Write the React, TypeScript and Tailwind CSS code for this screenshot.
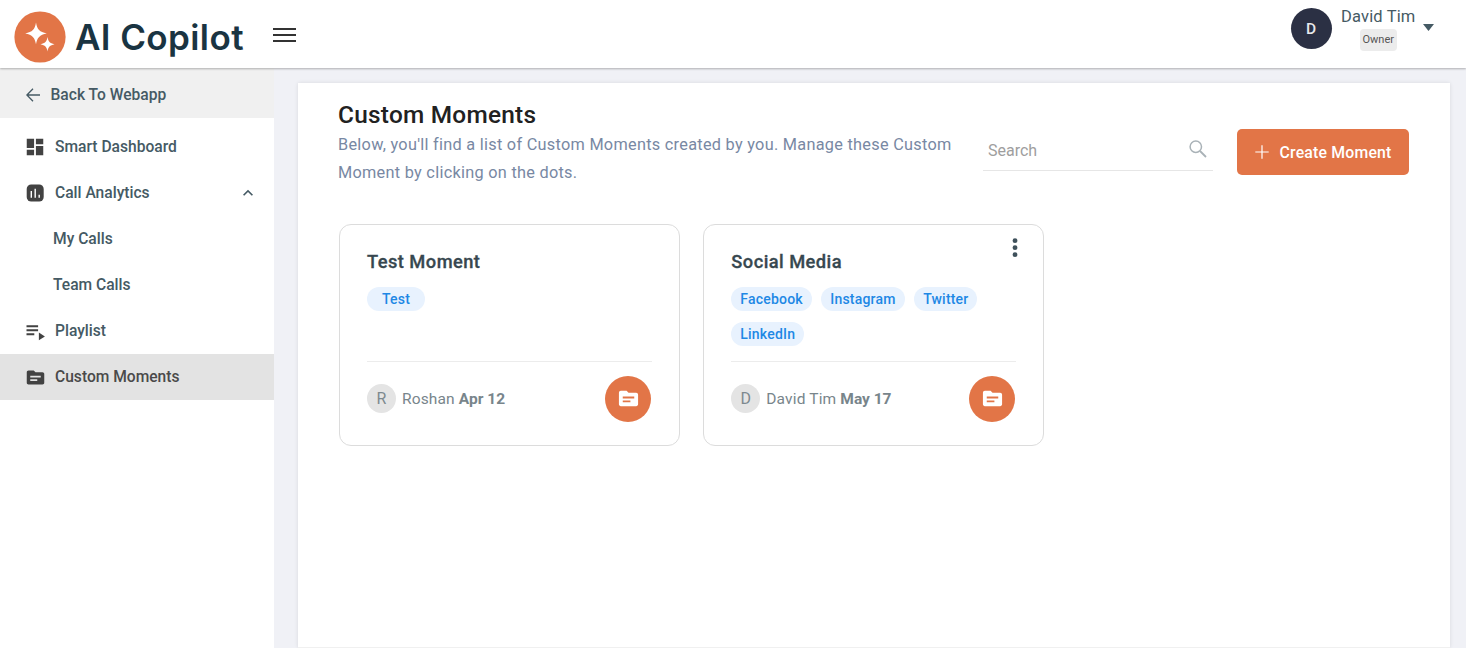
import { clsx } from "clsx";
import { MdDashboard, MdKeyboardArrowUp, MdSource } from "react-icons/md";

const AnalyticsIcon = () => (
  <svg width="18" height="18" viewBox="0 0 18 18">
    <rect x="0.7" y="0.5" width="17" height="17" rx="4.5" fill="#424242" />
    <path d="M5.3 7v6.8M9.2 4.8v9M13.2 10.8v3" stroke="#fff" strokeWidth="1.4" />
  </svg>
);

const PlaylistIcon = () => (
  <svg width="19" height="16" viewBox="0 0 19 16" fill="#424242" className="mt-[3px]">
    <path d="M0.5 0.3h11.6v1.9H0.5zM0.5 4.3h11.6v1.9H0.5zM0.5 8.3h7.8v1.9H0.5z" />
    <path d="M12.9 7.6v7.6l6-3.8z" />
  </svg>
);

const SparkleLogo = () => (
  <svg width="52" height="52" viewBox="0 0 52 52" className="shrink-0">
    <circle cx="26" cy="26" r="25.6" fill="#e27547" />
    <path
      fill="#fff"
      d="M22 11.5C23.2 18.5 25.5 20.9 32.8 22.4 25.5 23.9 23.2 26.3 22 33.3 20.8 26.3 18.5 23.9 11.2 22.4 18.5 20.9 20.8 18.5 22 11.5z"
    />
    <path
      fill="#fff"
      d="M33.5 26C34.3 30.6 35.8 32.2 40.5 33.2 35.8 34.2 34.3 35.8 33.5 40.4 32.7 35.8 31.2 34.2 26.5 33.2 31.2 32.2 32.7 30.6 33.5 26z"
    />
  </svg>
);

interface NavItemProps {
  label: string;
  icon?: React.ReactNode;
  active?: boolean;
  open?: boolean;
}

const NavItem = ({ label, icon, active, open }: NavItemProps) => {
  return (
    <li
      className={clsx(
        "flex items-center h-[46px] text-[15.6px] font-medium",
        icon ? "pl-[26px]" : "pl-[53px]",
        active ? "bg-[#e3e3e3] text-[#4a4a4a]" : "text-[#455a64]"
      )}
    >
      {icon && <span className="w-[29px] flex items-center">{icon}</span>}
      <span className="pt-[2px]">{label}</span>
      {open && <MdKeyboardArrowUp className="ml-auto mr-[16px] text-[#455a64]" size={20} />}
    </li>
  );
};

interface MomentCardProps {
  title: string;
  tags: string[];
  owner: string;
  date: string;
  menu?: boolean;
}

const MomentCard = ({ title, tags, owner, date, menu }: MomentCardProps) => {
  return (
    <article className="relative w-[341.5px] h-[221.5px] rounded-xl border border-[#dcdcdc] px-[27.5px] pt-[23px] flex flex-col">
      <h3 className="text-[18.3px] leading-[27px] font-medium tracking-[0.45px] text-[#37474f] [-webkit-text-stroke:0.3px_#37474f]">
        {title}
      </h3>
      {menu && (
        <button className="absolute right-[25px] top-[13px]">
          <svg width="6" height="20" viewBox="0 0 6 20" fill="#3f515b" className="block">
            <circle cx="3" cy="2.7" r="2.4" />
            <circle cx="3" cy="9.7" r="2.4" />
            <circle cx="3" cy="16.7" r="2.4" />
          </svg>
        </button>
      )}
      <div className="flex flex-wrap content-start gap-x-[9.5px] gap-y-[11px] mt-[12px] h-[74px]">
        {tags.map((tag) => (
          <span
            key={tag}
            className="h-6 min-w-[58px] px-[9px] rounded-full bg-[#e8f2fe] text-[#1e88e5] text-[14px] leading-6 font-medium tracking-[0.2px] text-center"
          >
            {tag}
          </span>
        ))}
      </div>
      <div className="border-t border-[#ececec] pt-[13.5px] flex items-center">
        <span className="size-[29px] rounded-full bg-[#e4e4e4] text-[#7d898f] flex items-center justify-center text-[16px]">
          {owner[0]}
        </span>
        <p className="ml-[6px] pt-[2px] text-[15.5px] tracking-[0.15px] text-[#78858b]">
          {owner} <b className="font-bold tracking-normal">{date}</b>
        </p>
        <span className="ml-auto mr-[0.5px] size-[46px] rounded-full bg-[#e27547] text-white flex items-center justify-center">
          <MdSource size={23} />
        </span>
      </div>
    </article>
  );
};

export default function App() {
  return (
    <div className="h-screen flex flex-col overflow-hidden bg-[#f0f1f6] font-[Roboto,sans-serif]">
      <header className="relative z-10 h-[68px] shrink-0 bg-white flex items-center shadow-[0_1px_2px_rgba(0,0,0,0.28)]">
        <div className="flex items-center pl-[14px] pt-[5px]">
          <SparkleLogo />
          <span className="w-[169px] ml-[9px] pt-[1px] whitespace-nowrap font-[Inter,sans-serif] font-semibold text-[35px] leading-[42px] tracking-[0.4px] text-[#1a3442]">
            AI Copilot
          </span>
        </div>
        <button className="ml-[29px] mt-[2px] flex flex-col gap-[4px]">
          <span className="w-[23px] h-[2px] bg-[#333]" />
          <span className="w-[23px] h-[2px] bg-[#333]" />
          <span className="w-[23px] h-[2px] bg-[#333]" />
        </button>
        <div className="ml-auto flex items-start pr-[32px] mb-[9px]">
          <span className="size-[41px] pt-[2px] rounded-full bg-[#2b3044] text-[#e8e8ec] text-[15.5px] font-medium flex items-center justify-center">
            D
          </span>
          <div className="ml-[9.5px] flex flex-col items-center -mt-[1px]">
            <span className="text-[16.5px] leading-5 tracking-[0.15px] text-[#455a64]">David Tim</span>
            <span className="mt-[2.5px] h-[22px] px-[3px] rounded-[4px] bg-[#ececec] text-[#555] text-[11px] leading-[22px]">
              Owner
            </span>
          </div>
          <svg width="11" height="7" viewBox="0 0 11 7" fill="#455a64" className="ml-[7.5px] mt-[16px]">
            <path d="M0 0h11L5.5 7z" />
          </svg>
        </div>
      </header>

      <div className="flex flex-1 min-h-0">
        <nav className="w-[274px] shrink-0 bg-white">
          <a className="flex items-center h-[50px] pt-[4px] pl-[26px] bg-[#f0f0f0] text-[15.6px] font-medium text-[#455a64]">
            <svg width="14" height="14" viewBox="0 0 14 14" fill="none" stroke="#455a64" strokeWidth="1.3" className="mr-[10.5px]">
              <path d="M14 7H1M7 0.8 0.9 7 7 13.2" />
            </svg>
            <span className="pt-[2px]">Back To Webapp</span>
          </a>
          <ul className="pt-[6px]">
            <NavItem label="Smart Dashboard" icon={<MdDashboard className="-ml-[2px] text-[#424242]" size={22} />} />
            <NavItem label="Call Analytics" icon={<AnalyticsIcon />} open />
            <NavItem label="My Calls" />
            <NavItem label="Team Calls" />
            <NavItem label="Playlist" icon={<PlaylistIcon />} />
            <NavItem label="Custom Moments" icon={<MdSource className="-ml-[1px] text-[#424242]" size={21} />} active />
          </ul>
        </nav>

        <main className="flex-1 pt-[15px] pl-[24px] pr-[16.5px]">
          <section className="h-full border-b border-[#f0f0f0] bg-white shadow-[0_0_4px_rgba(0,0,0,0.1)] px-[40px] pt-[18px]">
            <div className="flex">
              <div className="w-[630px] shrink-0">
                <h1 className="text-[24.4px] leading-[28px] font-medium tracking-[0.25px] text-[#212121]">
                  Custom Moments
                </h1>
                <p className="mt-[1.5px] text-[16.3px] leading-7 tracking-[0.28px] text-[#7888a3]">
                  Below, you'll find a list of Custom Moments created by you. Manage these Custom Moment by clicking on
                  the dots.
                </p>
              </div>
              <div className="ml-[15px] mt-[28.5px] w-[230px] h-[41px] px-[5px] border-b border-[#e6e6e6] flex shrink-0 items-center justify-between text-[16px] text-[#9e9e9e]">
                <span className="pt-[2px]">Search</span>
                <svg width="18" height="18" viewBox="0 0 18 18" fill="none" stroke="#a9b2b7" strokeWidth="1.5" className="mb-[2px] mr-[1px]">
                  <circle cx="6.8" cy="6.8" r="5.7" />
                  <path d="M11 11l6 6" strokeWidth="1.8" />
                </svg>
              </div>
              <button className="ml-[24px] mt-[28px] w-[172px] h-[46px] shrink-0 rounded-[5px] bg-[#e27547] text-white text-[15.8px] font-medium tracking-[0.2px] flex items-center pl-[18px]">
                <svg width="14" height="14" viewBox="0 0 14 14" stroke="#fff" strokeWidth="1.2" className="mr-[10.5px]">
                  <path d="M7 0.3v13.4M0.3 7h13.4" />
                </svg>
                <span className="pt-[1px]">Create Moment</span>
              </button>
            </div>
            <div className="flex gap-[22.8px] mt-[37.5px] ml-[0.5px]">
              <MomentCard title="Test Moment" tags={["Test"]} owner="Roshan" date="Apr 12" />
              <MomentCard
                title="Social Media"
                tags={["Facebook", "Instagram", "Twitter", "LinkedIn"]}
                owner="David Tim"
                date="May 17"
                menu
              />
            </div>
          </section>
        </main>
      </div>
    </div>
  );
}
